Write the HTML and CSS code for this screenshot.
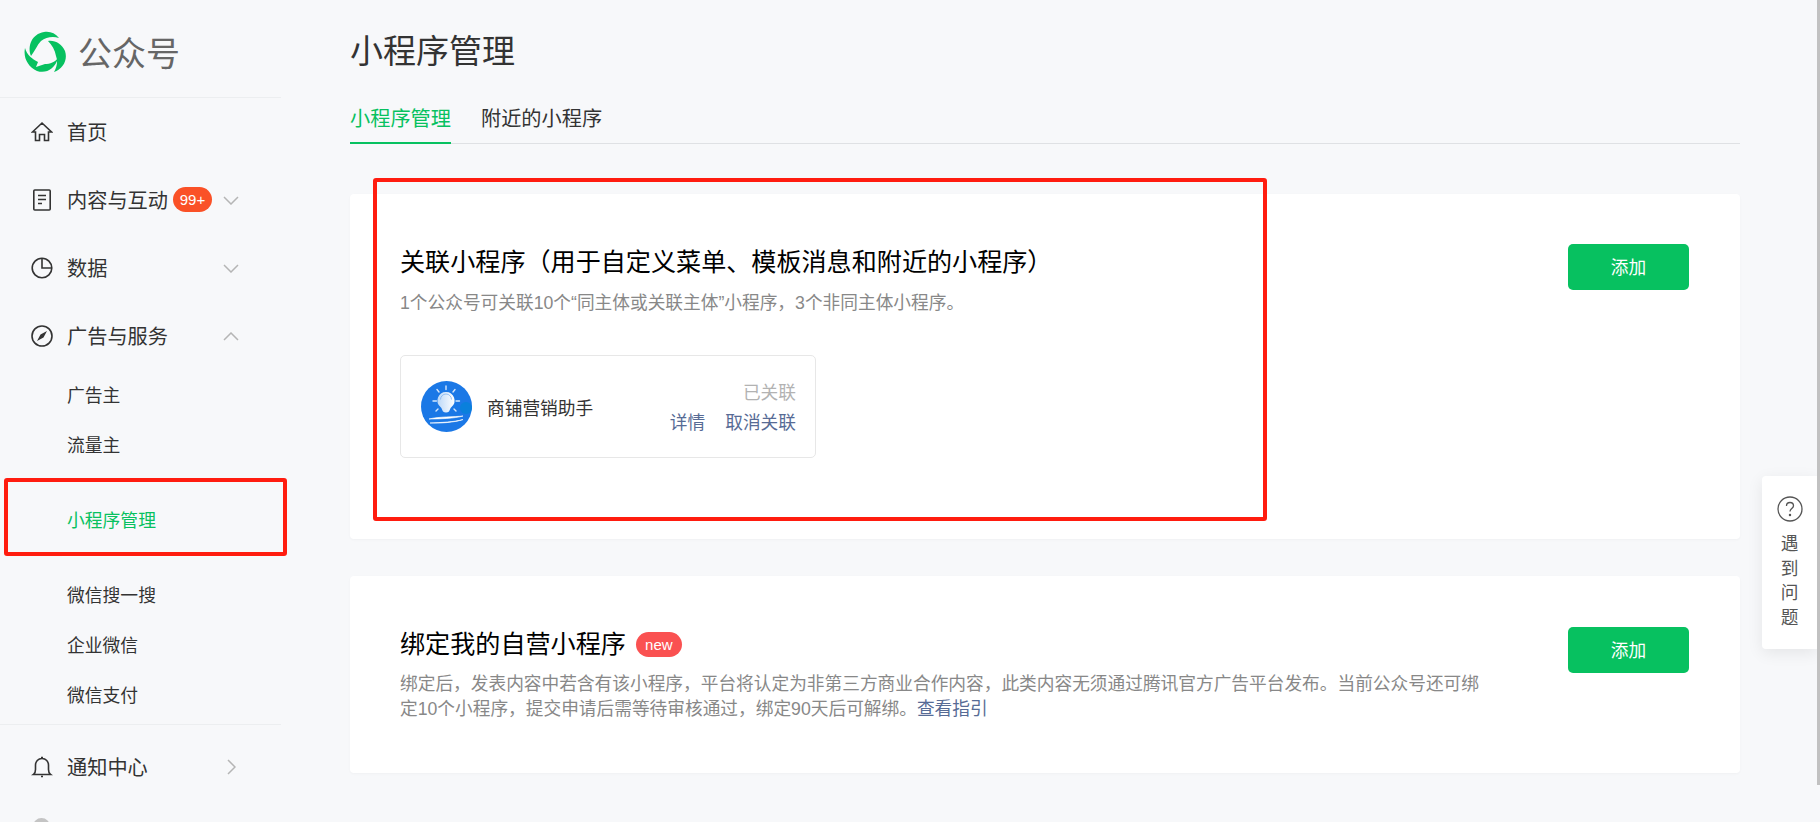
FILE: index.html
```html
<!DOCTYPE html>
<html lang="zh-CN">
<head>
<meta charset="utf-8">
<title>小程序管理</title>
<link rel="stylesheet" href="styles.css">
</head>
<body>
<div class="page">
  <aside class="sidebar">
    <div class="brand">
      <svg class="brand-logo" viewBox="0 0 43 42" width="43" height="42"><path fill="#07c160" d="M7 25C3 15 8 3 20 1c6-1 11 1 15 6-6-2-13-1-18 3-4 4-6 10-10 15z"/><path fill="#07c160" d="M24 10c7-1 14 3 17 10 3 9-2 18-11 21 3-5 4-11 2-16-1-6-4-11-8-15z"/><path fill="#07c160" d="M1 17c-2 10 3 19 12 23 9 3 18-2 21-13-3 4-8 6-13 6l-9 3 2-5C8 28 3 24 1 17z"/></svg>
      <span class="brand-name">公众号</span>
    </div>
    <nav class="nav">
      <a class="nav-item">
        <svg class="nav-icon" viewBox="0 0 22 22"><path d="M1.500 11 11 2l9.500 9h-3v8.500h-4v-6h-5v6h-4V11z"/></svg>
        <span>首页</span>
      </a>
      <a class="nav-item">
        <svg class="nav-icon" viewBox="0 0 22 22"><rect x="2.800" y="1" width="16.400" height="20" rx="1"/><path d="M7 6.500h8M7 10.500h8M7 14.500h4"/></svg>
        <span>内容与互动</span><span class="count">99+</span>
        <svg class="chev" viewBox="0 0 16 9"><path d="m1 1 7 7 7-7"/></svg>
      </a>
      <a class="nav-item">
        <svg class="nav-icon" viewBox="0 0 22 22"><circle cx="11" cy="11" r="9.800"/><path d="M11 1.200V11h9.800"/></svg>
        <span>数据</span>
        <svg class="chev" viewBox="0 0 16 9"><path d="m1 1 7 7 7-7"/></svg>
      </a>
      <a class="nav-item">
        <svg class="nav-icon" viewBox="0 0 22 22"><circle cx="11" cy="11" r="10"/><path class="solid" d="m16 6-3.500 6.500-3-3zM6 16l3.500-6.500 3 3z"/></svg>
        <span>广告与服务</span>
        <svg class="chev" viewBox="0 0 16 9"><path d="m1 8 7-7 7 7"/></svg>
      </a>
      <a class="sub-item">广告主</a>
      <a class="sub-item">流量主</a>
      <a class="sub-item sub-item-active">小程序管理</a>
      <a class="sub-item">微信搜一搜</a>
      <a class="sub-item">企业微信</a>
      <a class="sub-item">微信支付</a>
      <div class="nav-divider"></div>
      <a class="nav-item">
        <svg class="nav-icon" viewBox="0 0 22 22"><path d="M2.500 18.500c1.500-1 2-2.500 2-5V9c0-3.500 2.500-6.500 6.500-6.500s6.500 3 6.500 6.500v4.500c0 2.500.5 4 2 5h-17zM10 1.500h2M10 20.500h2"/></svg>
        <span>通知中心</span>
        <svg class="chev chev-right" viewBox="0 0 9 16"><path d="m1 1 7 7-7 7"/></svg>
      </a>
      <div class="account"><span class="account-avatar"></span></div>
    </nav>
  </aside>

  <main class="main">
    <h1 class="page-title">小程序管理</h1>
    <div class="tabs">
      <a class="tab tab-active">小程序管理</a>
      <a class="tab">附近的小程序</a>
    </div>

    <section class="card card-linked">
      <div class="card-body">
        <h2 class="card-title">关联小程序（用于自定义菜单、模板消息和附近的小程序）</h2>
        <p class="card-desc">1个公众号可关联10个“同主体或关联主体”小程序，3个非同主体小程序。</p>
        <div class="app">
          <svg class="app-avatar" viewBox="0 0 51 51">
            <defs><linearGradient id="bulb" x1="0" y1="0" x2="1" y2="0"><stop offset="0" stop-color="#bcd8f8"/><stop offset="1" stop-color="#ffffff"/></linearGradient></defs>
            <circle cx="25.500" cy="25.500" r="25.500" fill="#1b78e6"/>
            <circle cx="45" cy="27" r="6" fill="#0a80dc"/>
            <path fill="url(#bulb)" d="M25 11a8.500 8.500 0 0 1 5.500 15c-1.500 1.300-1.500 3-2.500 4.500-1.500 1.300-4.500 1.300-6 0-1-1.500-1-3.200-2.500-4.500A8.500 8.500 0 0 1 25 11z"/>
            <path d="M19.500 18.500a5.500 5.500 0 0 1 11 0" fill="none" stroke="#7fb2ef" stroke-width=".8"/>
            <path d="M25 5v3.500M16 8.500l2 2.500M34 8.500l-2 2.500M12 20h3.500M35 20h3.500M17 28l-2 2M33 28l2 2" stroke="#d5e6fb" stroke-width="1.400" stroke-linecap="round" fill="none"/>
            <path d="M8 38c10-2.500 25-2 34-3-8 2.500-24 3-34 3zM9 42c10-.5 25-1 33-3.500-8 3-24 4-33 3.500z" fill="#fff" stroke="#fff" stroke-width=".6"/>
          </svg>
          <span class="app-name">商铺营销助手</span>
          <div class="app-side">
            <span class="app-state">已关联</span>
            <div class="app-links"><a class="link">详情</a><a class="link">取消关联</a></div>
          </div>
        </div>
      </div>
      <button class="btn"><span class="btn-text">添加</span></button>
    </section>

    <section class="card card-bind">
      <div class="card-body">
        <h2 class="card-title">绑定我的自营小程序<span class="new">new</span></h2>
        <p class="card-desc card-desc-wide">绑定后，发表内容中若含有该小程序，平台将认定为非第三方商业合作内容，此类内容无须通过腾讯官方广告平台发布。当前公众号还可绑定10个小程序，提交申请后需等待审核通过，绑定90天后可解绑。<a class="link">查看指引</a></p>
      </div>
      <button class="btn"><span class="btn-text">添加</span></button>
    </section>
  </main>
</div>

<div class="help">
  <svg class="help-icon" viewBox="0 0 26 26"><circle cx="13" cy="13" r="12"/><path d="M9.500 10c0-2 1.500-3.500 3.500-3.500s3.500 1.400 3.500 3.200c0 2.800-3.500 2.800-3.500 5.800"/><circle class="dot" cx="13" cy="19" r=".6"/></svg>
  <span>遇</span><span>到</span><span>问</span><span>题</span>
</div>
<div class="scrollbar"></div>
<div class="mark mark-side"></div>
<div class="mark mark-card"></div>
</body>
</html>
```
FILE: styles.css
```css
* { box-sizing: border-box; }
html, body { margin: 0; height: 822px; overflow: hidden; }
body {
  background: #f7f8fa;
  color: #333;
  font-family: "Liberation Sans", "Noto Sans CJK SC", sans-serif;
  position: relative;
}
.page { display: flex; height: 822px; }
a { cursor: pointer; }

.sidebar { width: 281px; flex: none; }
.brand {
  display: flex; align-items: center; gap: 11px;
  height: 98px; padding: 12px 0 5px 24px;
  border-bottom: 1px solid #eceef0;
}
.brand-name { font-size: 34px; color: #666; line-height: 42px; padding-top: 4px; }
.nav-item {
  display: flex; align-items: center;
  height: 68px; padding-left: 31px; font-size: 20.200px; color: #333; position: relative;
}
.nav-item > span { margin-bottom: 2px; }
.nav-icon { width: 22px; height: 22px; margin-right: 14px; flex: none; fill: none; stroke: #333; stroke-width: 1.600; }
.nav-icon .solid { fill: #333; stroke: none; }
.count {
  margin-left: 5px; height: 25px; width: 39px; border-radius: 13px;
  background: #fa5127; color: #fff; font-size: 15px; line-height: 25px; text-align: center;
}
.chev { position: absolute; left: 223px; top: 30px; width: 16px; height: 9px; fill: none; stroke: #b5b5b5; stroke-width: 1.500; }
.chev-right { left: 227px; top: 26px; width: 9px; height: 16px; }
.sub-item { display: block; height: 50px; line-height: 52px; padding-left: 67px; font-size: 17.800px; color: #333; }
.sub-item-active {
  height: 76px; line-height: 78px; margin: 11px 21px 13px 62px; padding-left: 5px;
  color: #07c160; border-top: 1px solid #fafbfc; border-bottom: 1px solid #fafbfc;
}
.nav-divider { height: 1px; margin-top: 4px; background: #eceef0; margin-bottom: 8px; }
.account { padding: 17px 0 0 33px; }
.account-avatar { display: block; width: 17px; height: 17px; border-radius: 50%; background: #c4c4c4; }

.main { width: 1390px; margin-left: 69px; flex: none; }
.page-title { margin: 0; padding-top: 29px; font-size: 33px; line-height: 46px; font-weight: 400; color: #333; }
.tabs { display: flex; gap: 30px; margin-top: 22px; height: 47px; border-bottom: 1px solid #dfe1e4; }
.tab { font-size: 20.200px; line-height: 44px; height: 47px; color: #333; }
.tab-active { color: #07c160; border-bottom: 2px solid #07c160; }

.card {
  display: flex; justify-content: space-between; align-items: flex-start;
  background: #fff; border-radius: 4px; padding: 0 51px 0 50px;
  box-shadow: 0 1px 3px rgba(0, 0, 0, .03);
}
.card-linked { height: 345px; margin-top: 50px; padding-top: 50px; }
.card-bind { height: 197px; margin-top: 37px; padding-top: 51px; }
.card-title { margin: 0; font-size: 25.100px; line-height: 36px; font-weight: 400; color: #000; display: flex; align-items: center; }
.card-bind .card-title { margin-top: -1px; }
.card-desc { margin: 10px 0 0; font-size: 17.700px; line-height: 26px; color: #888; }
.card-desc-wide { width: 1084px; margin-top: 10px; line-height: 25px; }
.link { color: #576b95; }
.new {
  margin-left: 10px; width: 46px; height: 25px; border-radius: 13px;
  background: #fa5151; color: #fff; font-size: 15px; line-height: 25px; text-align: center;
}
.app {
  display: flex; align-items: center;
  width: 416px; height: 103px; margin-top: 39px; padding: 0 19px 0 20px;
  border: 1px solid #e7e7e7; border-radius: 5px;
}
.app-avatar { width: 51px; height: 51px; flex: none; }
.app-name { margin-left: 15px; font-size: 17.700px; color: #333; flex: 1; }
.app-side { text-align: right; font-size: 17.700px; line-height: 30px; padding-top: 2px; }
.app-state { color: #b2b2b2; }
.app-links { display: flex; gap: 20px; }

.btn {
  width: 121px; height: 46px; flex: none; border: 0; border-radius: 5px;
  background: #07c160; color: #fff; font: inherit; font-size: 17.700px;
}
.btn-text { display: block; padding-bottom: 3px; }

.help {
  position: absolute; left: 1762px; top: 476px; width: 55px; height: 173px;
  display: flex; flex-direction: column; align-items: center; padding-top: 20px;
  background: #fff; border-radius: 4px 0 0 4px; box-shadow: 0 4px 16px rgba(0, 0, 0, .08);
  font-size: 17.700px; line-height: 24.500px; color: #555;
}
.help-icon { width: 26px; height: 26px; margin-bottom: 10px; flex: none; fill: none; stroke: #555; stroke-width: 1.300; }
.help-icon .dot { fill: #555; }
.scrollbar { position: absolute; left: 1817px; top: 0; width: 3px; height: 785px; background: #c1c1c1; }
.mark { position: absolute; border: 4px solid #ff1c0f; border-radius: 3px; }
.mark-side { left: 4px; top: 478px; width: 283px; height: 78px; }
.mark-card { left: 373px; top: 178px; width: 894px; height: 343px; }
```
